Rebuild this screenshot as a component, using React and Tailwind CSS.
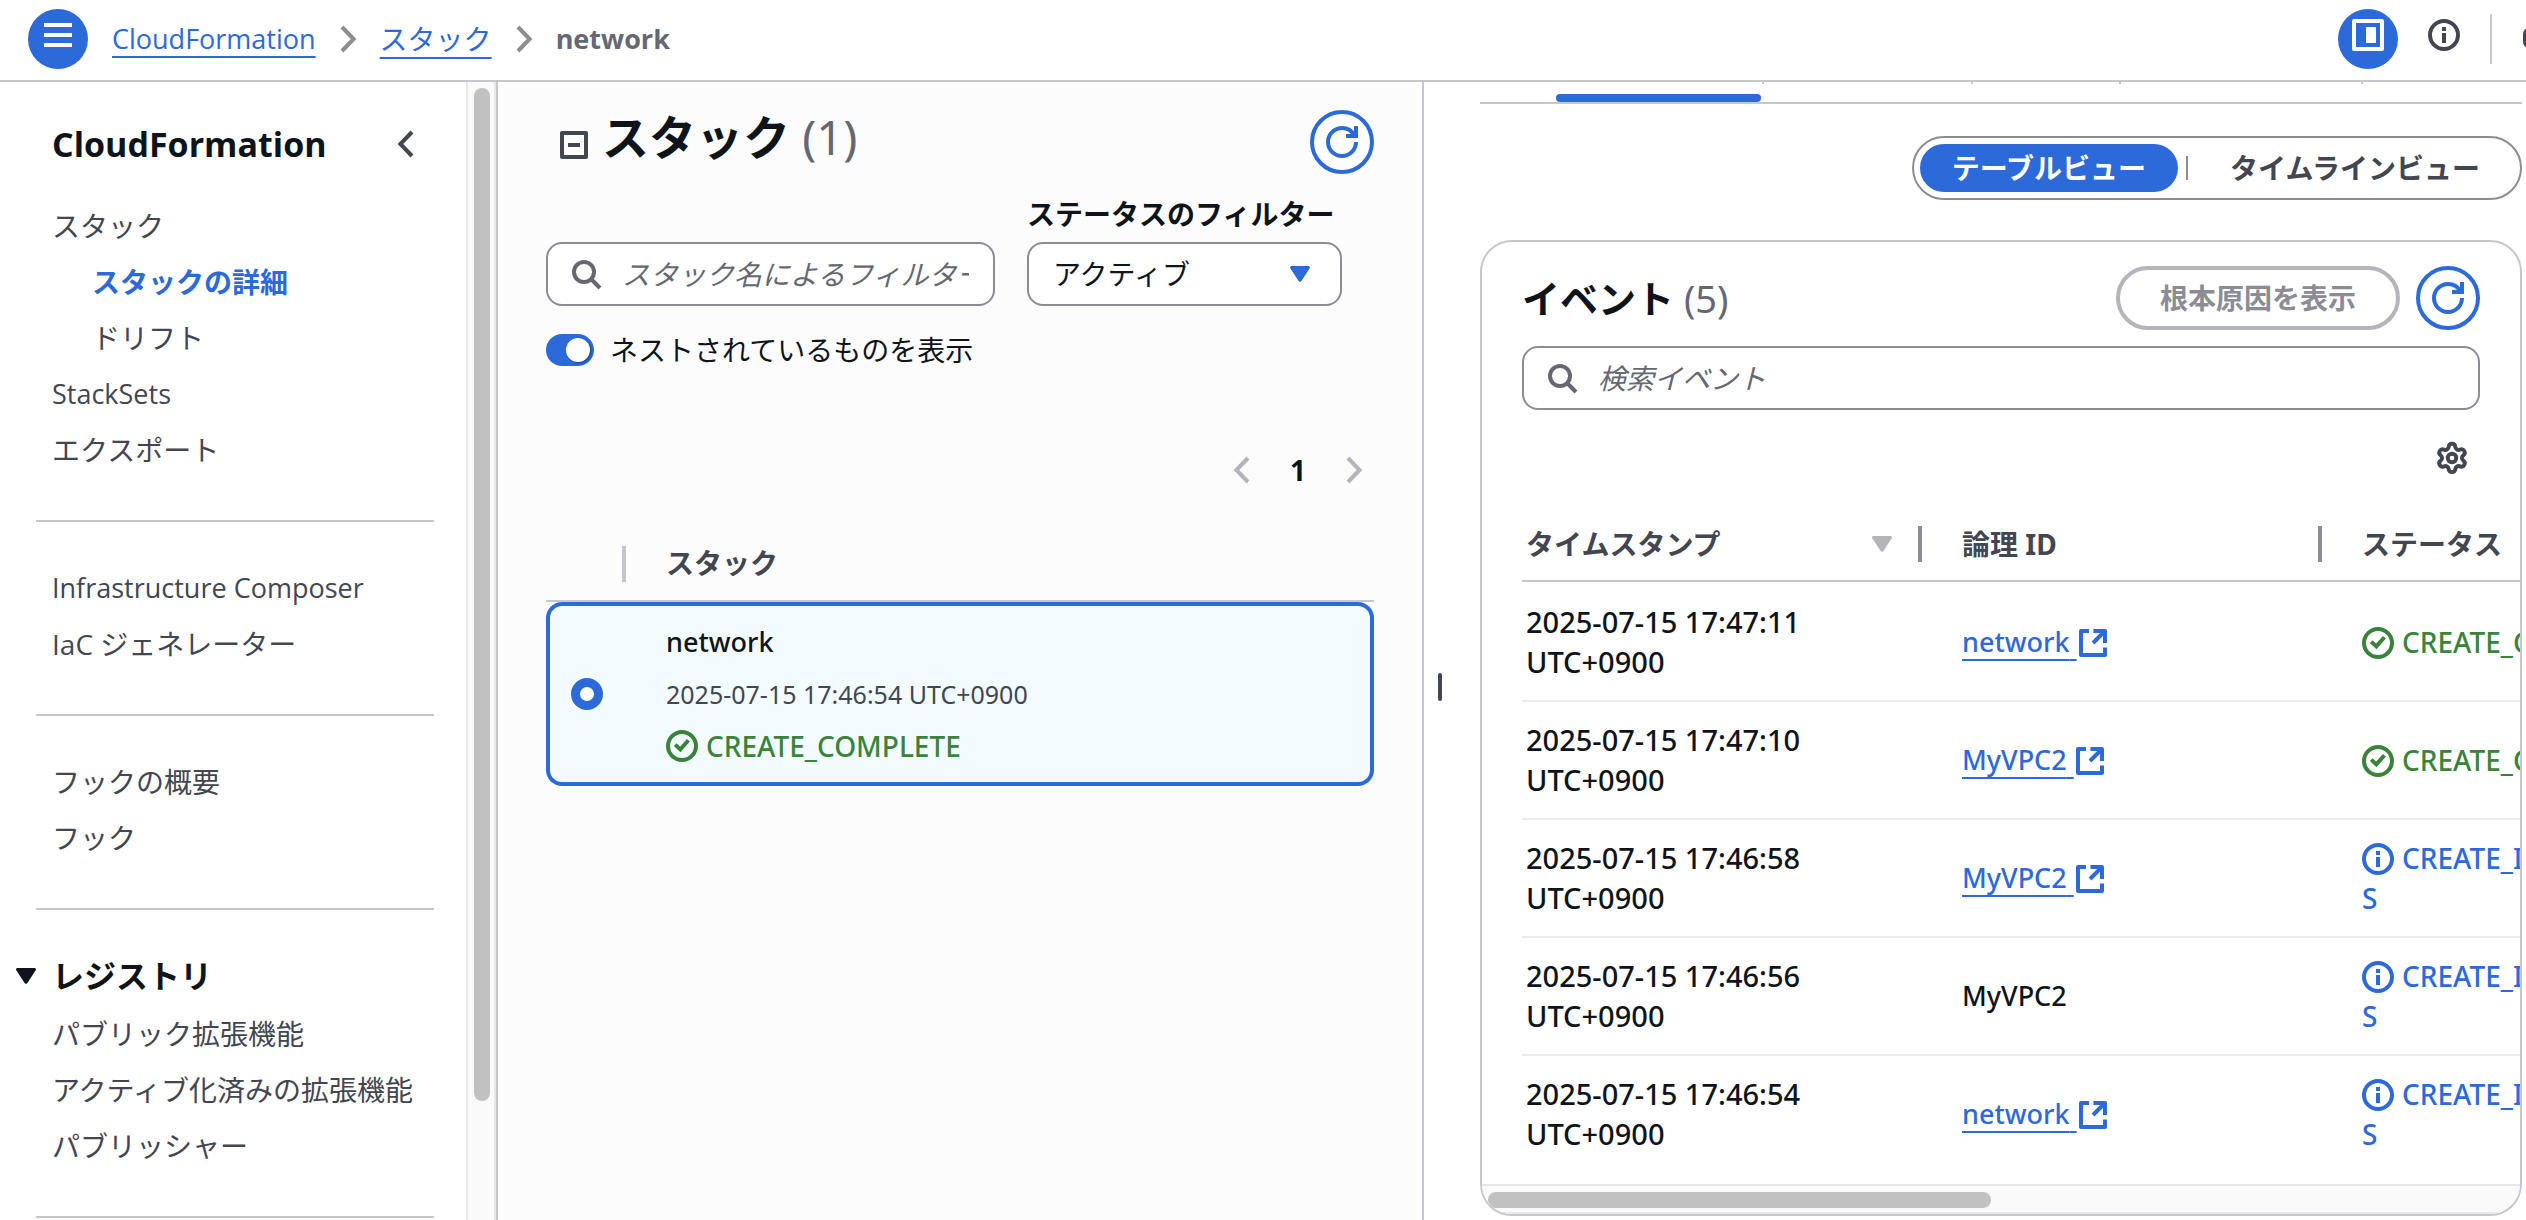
import React from "react";
import { Settings } from "lucide-react";

function Svg({ className = "size-8", children, ...rest }) {
  return (
    <svg viewBox="0 0 16 16" fill="none" stroke="currentColor" strokeWidth="2" className={`shrink-0 ${className}`} aria-hidden="true" {...rest}>
      {children}
    </svg>
  );
}

const Chevron = ({ left, className }) => (
  <Svg className={`size-8 ${className}`}>
    <path d={left ? "M11 2 5.2 8 11 14" : "M5 2l5.8 6L5 14"} />
  </Svg>
);

const SearchIcon = () => (
  <Svg className="size-8 text-[#656871]">
    <circle cx="7" cy="7" r="5" />
    <path d="m11 11 4 4" />
  </Svg>
);

const Triangle = ({ className }) => (
  <svg viewBox="0 0 20 16" fill="currentColor" className={`h-4 w-5 shrink-0 ${className}`} aria-hidden="true">
    <path d="M1.6 0h16.8c1.3 0 2 1.3 1.3 2.3l-8.300 12.800c-.7 1.100-2.100 1.100-2.800 0L.3 2.300C-.4 1.300.3 0 1.600 0z" />
  </svg>
);

const InfoIcon = ({ className }) => (
  <Svg className={className}>
    <circle cx="8" cy="8" r="7" />
    <path d="M8 12V7M8 6V4" />
  </Svg>
);

const SuccessIcon = ({ className }) => (
  <Svg className={className}>
    <circle cx="8" cy="8" r="7" />
    <path d="m4.600 7.300 2.600 2.400 4-4.600" />
  </Svg>
);

function RefreshButton() {
  return (
    <button type="button" aria-label="更新" className="flex size-16 shrink-0 items-center justify-center rounded-full border-4 border-[#2c69d9] bg-white text-[#2c69d9]">
      <Svg>
        <path d="M10 5h5V0" />
        <path d="M15 8a7 7 0 1 1-7-7c2.800 0 5.200 1.600 6.300 4" />
      </Svg>
    </button>
  );
}

function SearchBox({ placeholder }) {
  return (
    <label className="flex h-16 min-w-0 items-center gap-5 rounded-2xl border-2 border-[#8c8c94] bg-white pr-6 pl-[22px]">
      <SearchIcon />
      <input
        type="text"
        aria-label={placeholder}
        placeholder={placeholder}
        className="w-full min-w-0 bg-transparent italic outline-none placeholder:text-[#656871]"
      />
    </label>
  );
}

const link = "text-[#2c69d9] underline decoration-2 underline-offset-[7px]";
const inlineIcon = "-mt-2.5 -mb-1.5 inline-block size-8 align-middle";

function Header() {
  return (
    <header className="flex h-[82px] shrink-0 items-center overflow-hidden border-b-2 border-[#c6c6cd] bg-white pb-0.5 pl-7">
      <button type="button" aria-label="メニュー" className="flex size-[60px] items-center justify-center rounded-full bg-[#2c69d9] pb-2 text-white">
        <Svg>
          <path d="M1 3h14M1 8h14M1 13h14" />
        </Svg>
      </button>
      <nav aria-label="パンくずリスト" className="ml-6 flex items-center gap-4 font-['Open_Sans','Noto_Sans_CJK_JP',sans-serif]">
        <a href="#" className={`${link} text-[27px]`}>CloudFormation</a>
        <Chevron className="text-[#8c8c94]" />
        <a href="#" className={link}>スタック</a>
        <Chevron className="text-[#8c8c94]" />
        <span className="text-[27px] font-bold text-[#656871]">network</span>
      </nav>
      <div className="ml-auto flex items-center">
        <button type="button" aria-label="分割パネル" className="flex size-[60px] items-center justify-center rounded-full bg-[#2c69d9] pb-2 text-white">
          <Svg>
            <rect x="1" y="1" width="14" height="14" strokeLinejoin="round" />
            <rect x="7" y="4" width="5" height="8" rx="0.4" fill="currentColor" stroke="none" />
          </Svg>
        </button>
        <button type="button" aria-label="情報" className="ml-[30px] pb-2 text-[#424650]">
          <InfoIcon className="size-8" />
        </button>
        <span className="ml-[30px] h-[50px] w-0.5 bg-[#c6c6cd]" />
        <span className="-mr-[29px] mb-0.5 ml-[31px] h-5 w-8 rounded-md border-4 border-[#424650]" />
      </div>
    </header>
  );
}

const navGroups = [
  [
    { label: "スタック" },
    { label: "スタックの詳細", nested: true, active: true },
    { label: "ドリフト", nested: true },
    { label: "StackSets", latin: true },
    { label: "エクスポート" },
  ],
  [{ label: "Infrastructure Composer", latin: true }, { label: "IaC ジェネレーター" }],
  [{ label: "フックの概要" }, { label: "フック" }],
  [{ label: "パブリック拡張機能" }, { label: "アクティブ化済みの拡張機能" }, { label: "パブリッシャー" }],
];

function NavList({ items }) {
  return (
    <ul className="flex flex-col gap-4 pl-4">
      {items.map((item) => (
        <li key={item.label} className={`flex ${item.nested ? "pl-10" : ""} ${item.latin ? "text-[27px] font-medium" : ""}`}>
          <a href="#" className={item.active ? "font-bold text-[#2c69d9]" : "text-[#424650]"}>
            {item.label}
          </a>
        </li>
      ))}
    </ul>
  );
}

function Sidebar() {
  return (
    <aside className="flex w-[498px] shrink-0 border-r-2 border-[#c6c6cd] bg-white font-['Open_Sans','Noto_Sans_CJK_JP',sans-serif]">
      <div className="min-w-0 flex-1 overflow-hidden pr-8 pl-9">
        <div className="flex h-[124px] items-center justify-between pr-3 pl-4">
          <h2 className="text-[34px] leading-[48px] font-bold text-[#0f141a]">CloudFormation</h2>
          <button type="button" aria-label="ナビゲーションを閉じる" className="text-[#424650]">
            <Chevron left className="" />
          </button>
        </div>
        <nav>
          {navGroups.map((items, index) => (
            <React.Fragment key={index}>
              {index === 3 && (
                <button type="button" className="-mt-0.5 mb-4 -ml-5 flex h-11 items-center gap-4 text-[32px] leading-[44px] font-bold text-[#0f141a]">
                  <Triangle />
                  レジストリ
                </button>
              )}
              <NavList items={items} />
              <hr className={`mb-[46px] border-t-2 border-[#c6c6cd] ${index === 0 ? "mt-[50px]" : "mt-[50px]"}`} />
            </React.Fragment>
          ))}
        </nav>
      </div>
      <div className="w-[30px] shrink-0 border-r-2 border-l-2 border-[#e8e8e8] bg-[#fafafa] px-1.5 py-1.5">
        <div className="h-[90%] w-4 rounded-full bg-[#c1c1c1]" />
      </div>
    </aside>
  );
}

function StackList() {
  return (
    <section className="min-w-0 flex-[924] border-r-2 border-[#c6c6cd] bg-[#fcfcfd]">
      <div className="px-12 pt-7">
        <div className="flex h-16 items-center justify-between">
          <div className="flex h-[54px] items-center gap-3 self-start pl-3">
            <button type="button" aria-label="折りたたむ" className="mt-4 text-[#424650]">
              <Svg>
                <rect x="2" y="2" width="12" height="12" strokeLinejoin="round" />
                <path d="M5 8h6" />
              </Svg>
            </button>
            <h1 className="text-[47px] leading-[60px] font-bold text-[#0f141a]">
              スタック <span className="font-normal text-[#656871]">(1)</span>
            </h1>
          </div>
          <RefreshButton />
        </div>

        <div className="mt-5 grid grid-cols-[449fr_315fr] items-end gap-8 pr-8">
          <SearchBox placeholder="スタック名によるフィルター" />
          <div>
            <label htmlFor="status" className="mb-2 block font-bold whitespace-nowrap">ステータスのフィルター</label>
            <div className="relative">
              <select id="status" className="h-16 w-full appearance-none rounded-2xl border-2 border-[#8c8c94] bg-white px-6 outline-none">
                <option>アクティブ</option>
              </select>
              <Triangle className="pointer-events-none absolute top-6 right-8 text-[#2c69d9]" />
            </div>
          </div>
        </div>

        <label className="mt-6 flex items-center gap-4">
          <span className="relative flex">
            <input type="checkbox" role="switch" defaultChecked className="h-8 w-12 appearance-none rounded-full bg-[#2c69d9]" />
            <span className="pointer-events-none absolute top-1 right-1 size-6 rounded-full bg-white shadow-[1px_1px_2px_rgba(0,0,0,0.4)]" />
          </span>
          ネストされているものを表示
        </label>

        <div className="mt-20 flex items-center justify-end gap-6 pr-1 text-[#b4b4bb]">
          <button type="button" aria-label="前のページ"><Chevron left className="" /></button>
          <button type="button" className="w-8 font-bold text-[#0f141a]">1</button>
          <button type="button" aria-label="次のページ"><Chevron className="" /></button>
        </div>

        <table className="mt-9 w-full border-separate border-spacing-0 text-left">
          <thead>
            <tr>
              <th className="w-20 border-b-2 border-[#c6c6cd] pt-5 pb-[18px]">
                <span className="ml-auto block h-9 w-1 bg-[#c6c6cd]" />
              </th>
              <th className="border-b-2 border-[#c6c6cd] py-0 pl-10 font-bold text-[#424650]">スタック</th>
            </tr>
          </thead>
          <tbody>
            <tr>
              <td className="rounded-l-2xl border-4 border-r-0 border-[#2c69d9] bg-[#f2fcff] pl-[21px] align-middle">
                <input type="radio" name="stack" aria-label="network" defaultChecked className="block size-8 appearance-none rounded-full border-[9px] border-[#2c69d9] bg-white" />
              </td>
              <td className="rounded-r-2xl border-4 border-l-0 border-[#2c69d9] bg-[#f2fcff] py-4 pl-10">
                <div className="text-[27px] font-medium">network</div>
                <div className="my-3 text-[25px] text-[#424650]">2025-07-15 17:46:54 UTC+0900</div>
                <div className="flex items-center gap-2 font-medium text-[#39833a]">
                  <SuccessIcon className="size-8" />
                  CREATE_COMPLETE
                </div>
              </td>
            </tr>
          </tbody>
        </table>
      </div>
    </section>
  );
}

const events = [
  { time: "2025-07-15 17:47:11", id: "network", href: true, done: true },
  { time: "2025-07-15 17:47:10", id: "MyVPC2", href: true, done: true },
  { time: "2025-07-15 17:46:58", id: "MyVPC2", href: true },
  { time: "2025-07-15 17:46:56", id: "MyVPC2" },
  { time: "2025-07-15 17:46:54", id: "network", href: true },
];

function EventsTable() {
  const th = "border-b-2 border-[#c6c6cd] pt-5 pb-[18px] font-bold text-[#424650]";
  const td = "border-b-2 border-[#ebebf0] py-[18px] group-first:pt-5 group-last:border-b-0";
  return (
    <div className="mt-8 overflow-hidden pb-3 pl-10">
      <table className="w-[1168px] table-fixed border-separate border-spacing-0 text-left">
        <thead>
          <tr>
            <th className={`${th} w-[400px] pl-1`}>
              <div className="flex h-9 items-center">
                タイムスタンプ
                <Triangle className="mr-[26px] ml-auto text-[#b4b4bb]" />
                <span className="h-9 w-1 bg-[#8c8c94]" />
              </div>
            </th>
            <th className={`${th} w-[400px] pl-10`}>
              <div className="flex h-9 items-center justify-between">
                論理 ID
                <span className="h-9 w-1 bg-[#8c8c94]" />
              </div>
            </th>
            <th className={`${th} pl-10`}>
              <div className="flex h-9 items-center">ステータス</div>
            </th>
          </tr>
        </thead>
        <tbody className="font-medium">
          {events.map((event) => (
            <tr key={event.time} className="group">
              <td className={`${td} pl-1 text-[29px]`}>
                {event.time}
                <br />
                UTC+0900
              </td>
              <td className={`${td} pl-10 text-[27px]`}>
                {event.href ? (
                  <a href="#" className={link}>
                    {event.id}&nbsp;
                    <Svg className={inlineIcon}>
                      <path d="M6 2H2v12h12v-3.700" strokeLinejoin="round" />
                      <path d="M8.200 2H14v6M8 8l6-6" strokeLinejoin="round" />
                    </Svg>
                  </a>
                ) : (
                  event.id
                )}
              </td>
              <td className={`${td} pl-10 break-all ${event.done ? "text-[#39833a]" : "text-[#2c69d9]"}`}>
                {event.done ? <SuccessIcon className={`${inlineIcon} mr-2`} /> : <InfoIcon className={`${inlineIcon} mr-2`} />}
                {event.done ? "CREATE_COMPLETE" : "CREATE_IN_PROGRESS"}
              </td>
            </tr>
          ))}
        </tbody>
      </table>
    </div>
  );
}

function Events() {
  return (
    <section className="flex min-w-0 flex-[1102] bg-white">
      <div className="flex w-14 shrink-0 items-center pl-3.5" role="separator" aria-label="サイズ変更">
        <span className="mt-[72px] h-7 w-1 rounded-full bg-[#424650]" />
      </div>
      <div className="min-w-0 flex-1 pr-1">
        <div className="flex h-[22px] border-b-2 border-[#c6c6cd]">
          <div className="flex w-[284px] items-end justify-between pl-[76px]">
            <span className="h-2 w-[205px] rounded-[4px] bg-[#2c69d9]" />
            <span className="h-0.5 w-0.5 self-start bg-[#c6c6cd]" />
          </div>
          <div className="flex w-[209px] justify-end"><span className="h-0.5 w-0.5 bg-[#c6c6cd]" /></div>
          <div className="flex w-[148px] justify-end"><span className="h-0.5 w-0.5 bg-[#c6c6cd]" /></div>
          <div className="flex w-[242px] justify-end"><span className="h-0.5 w-0.5 bg-[#c6c6cd]" /></div>
        </div>

        <div className="mt-8 flex justify-end">
          <div className="flex h-16 items-center gap-2 rounded-full border-2 border-[#8c8c94] px-1.5 font-bold">
            <button type="button" aria-pressed="true" className="h-12 rounded-full bg-[#2c69d9] px-8 leading-10 text-white">テーブルビュー</button>
            <span className="h-6 w-0.5 bg-[#8c8c94]" />
            <button type="button" aria-pressed="false" className="h-12 px-[34px] leading-10 text-[#424650]">タイムラインビュー</button>
          </div>
        </div>

        <div className="mt-10 overflow-hidden rounded-[32px] border-2 border-[#c6c6cd]">
          <div className="px-10 pt-6">
            <div className="flex items-center gap-4">
              <h2 className="mr-auto text-[38px] leading-[48px] font-bold text-[#0f141a]">
                イベント <span className="font-normal text-[#656871]">(5)</span>
              </h2>
              <button type="button" disabled className="h-16 rounded-full border-4 border-[#b4b4bb] px-10 font-bold text-[#8c8c94]">根本原因を表示</button>
              <RefreshButton />
            </div>
            <div className="mt-4">
              <SearchBox placeholder="検索イベント" />
            </div>
            <div className="mt-8 flex h-8 items-center justify-end pr-[11px]">
              <button type="button" aria-label="設定" className="text-[#424650]">
                <Settings size={34} strokeWidth={2.8} />
              </button>
            </div>
          </div>
          <EventsTable />
          <div className="h-[30px] border-t-2 border-b-2 border-[#e8e8e8] bg-[#fafafa] px-1.5 pt-1.5">
            <div className="h-4 w-[49%] rounded-full bg-[#c1c1c1]" />
          </div>
        </div>
      </div>
    </section>
  );
}

export default function App() {
  return (
    <div className="flex h-screen flex-col overflow-hidden bg-white font-['Noto_Sans','Noto_Sans_CJK_JP',sans-serif] text-[28px] leading-[40px] text-[#0f141a]">
      <Header />
      <main className="flex min-h-0 flex-1">
        <Sidebar />
        <StackList />
        <Events />
      </main>
    </div>
  );
}
